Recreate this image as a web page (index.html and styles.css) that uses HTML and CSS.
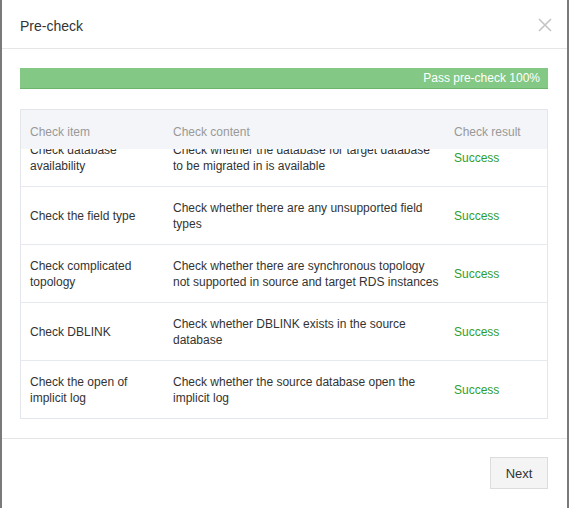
FILE: index.html
```html
<!DOCTYPE html>
<html>
<head>
<meta charset="utf-8">
<link rel="stylesheet" href="styles.css">
</head>
<body>
<div class="modal">
  <div class="modal-header">
    <div class="title">Pre-check</div>
    <svg class="close" width="14" height="14" viewBox="0 0 14 14"><path d="M1 1L13 13M13 1L1 13" stroke="#c4c4c4" stroke-width="1.6" fill="none"/></svg>
  </div>
  <div class="modal-body">
    <div class="progress">Pass pre-check 100%</div>
    <div class="table">
      <div class="thead row-grid">
        <div class="cell">Check item</div>
        <div class="cell">Check content</div>
        <div class="cell">Check result</div>
      </div>
      <div class="tbody">
        <div class="row row-grid">
          <div class="cell">Check database<br>availability</div>
          <div class="cell">Check whether the database for target database<br>to be migrated in is available</div>
          <div class="cell ok">Success</div>
        </div>
        <div class="row row-grid">
          <div class="cell">Check the field type</div>
          <div class="cell">Check whether there are any unsupported field<br>types</div>
          <div class="cell ok">Success</div>
        </div>
        <div class="row row-grid">
          <div class="cell">Check complicated<br>topology</div>
          <div class="cell">Check whether there are synchronous topology<br>not supported in source and target RDS instances</div>
          <div class="cell ok">Success</div>
        </div>
        <div class="row row-grid">
          <div class="cell">Check DBLINK</div>
          <div class="cell">Check whether DBLINK exists in the source<br>database</div>
          <div class="cell ok">Success</div>
        </div>
        <div class="row row-grid">
          <div class="cell">Check the open of<br>implicit log</div>
          <div class="cell">Check whether the source database open the<br>implicit log</div>
          <div class="cell ok">Success</div>
        </div>
      </div>
    </div>
  </div>
  <div class="modal-footer">
    <button class="btn">Next</button>
  </div>
</div>
</body>
</html>
```
FILE: styles.css
```css
html, body {
  margin: 0;
  padding: 0;
}
body {
  background: #7a7a7a;
  font-family: "Liberation Sans", Arial, sans-serif;
  color: #333;
  width: 569px;
  height: 508px;
  overflow: hidden;
}
.modal {
  margin-left: 2px;
  width: 565px;
  height: 508px;
  background: #fff;
  display: flex;
  flex-direction: column;
}
.modal-header {
  height: 49px;
  border-bottom: 1px solid #e6e6e6;
  display: flex;
  align-items: center;
  justify-content: space-between;
  padding: 0 15px 0 18px;
  box-sizing: border-box;
  flex: none;
}
.title {
  font-size: 14px;
  color: #333;
  padding-top: 3px;
}
.close {
  display: block;
  margin-top: 1px;
}
.modal-body {
  padding: 19px 19px 19px 18px;
  border-bottom: 1px solid #e6e6e6;
  flex: none;
}
.progress {
  line-height: 20px;
  background: #83c884;
  border-bottom: 1px solid #6bb56d;
  box-sizing: border-box;
  height: 21px;
  color: #fff;
  font-size: 12px;
  text-align: right;
  padding-right: 8px;
}
.table {
  margin-top: 20px;
  border: 1px solid #e3e6ea;
  height: 308px;
  overflow: hidden;
}
.row-grid {
  display: grid;
  grid-template-columns: 143px 281px 1fr;
}
.thead {
  position: relative;
  z-index: 1;
  height: 39px;
  background: #f4f5f8;
  color: #999;
  font-size: 12px;
  align-items: center;
  padding-top: 5px;
  box-sizing: border-box;
}
.cell {
  padding-left: 9px;
}
.tbody {
  margin-top: -20px;
  font-size: 12px;
  line-height: 16px;
}
.row {
  height: 58px;
  box-sizing: border-box;
  border-bottom: 1px solid #e6e9ed;
  align-items: center;
}
.row:last-child {
  border-bottom: none;
}
.ok {
  color: #2f9e2f;
}
.modal-footer {
  display: flex;
  justify-content: flex-end;
  padding: 18px 19px 0 0;
}
.btn {
  width: 58px;
  height: 32px;
  background: #f4f4f4;
  border: 1px solid #dcdcdc;
  font-family: "Liberation Sans", Arial, sans-serif;
  font-size: 13px;
  color: #333;
  padding: 0;
}
```
